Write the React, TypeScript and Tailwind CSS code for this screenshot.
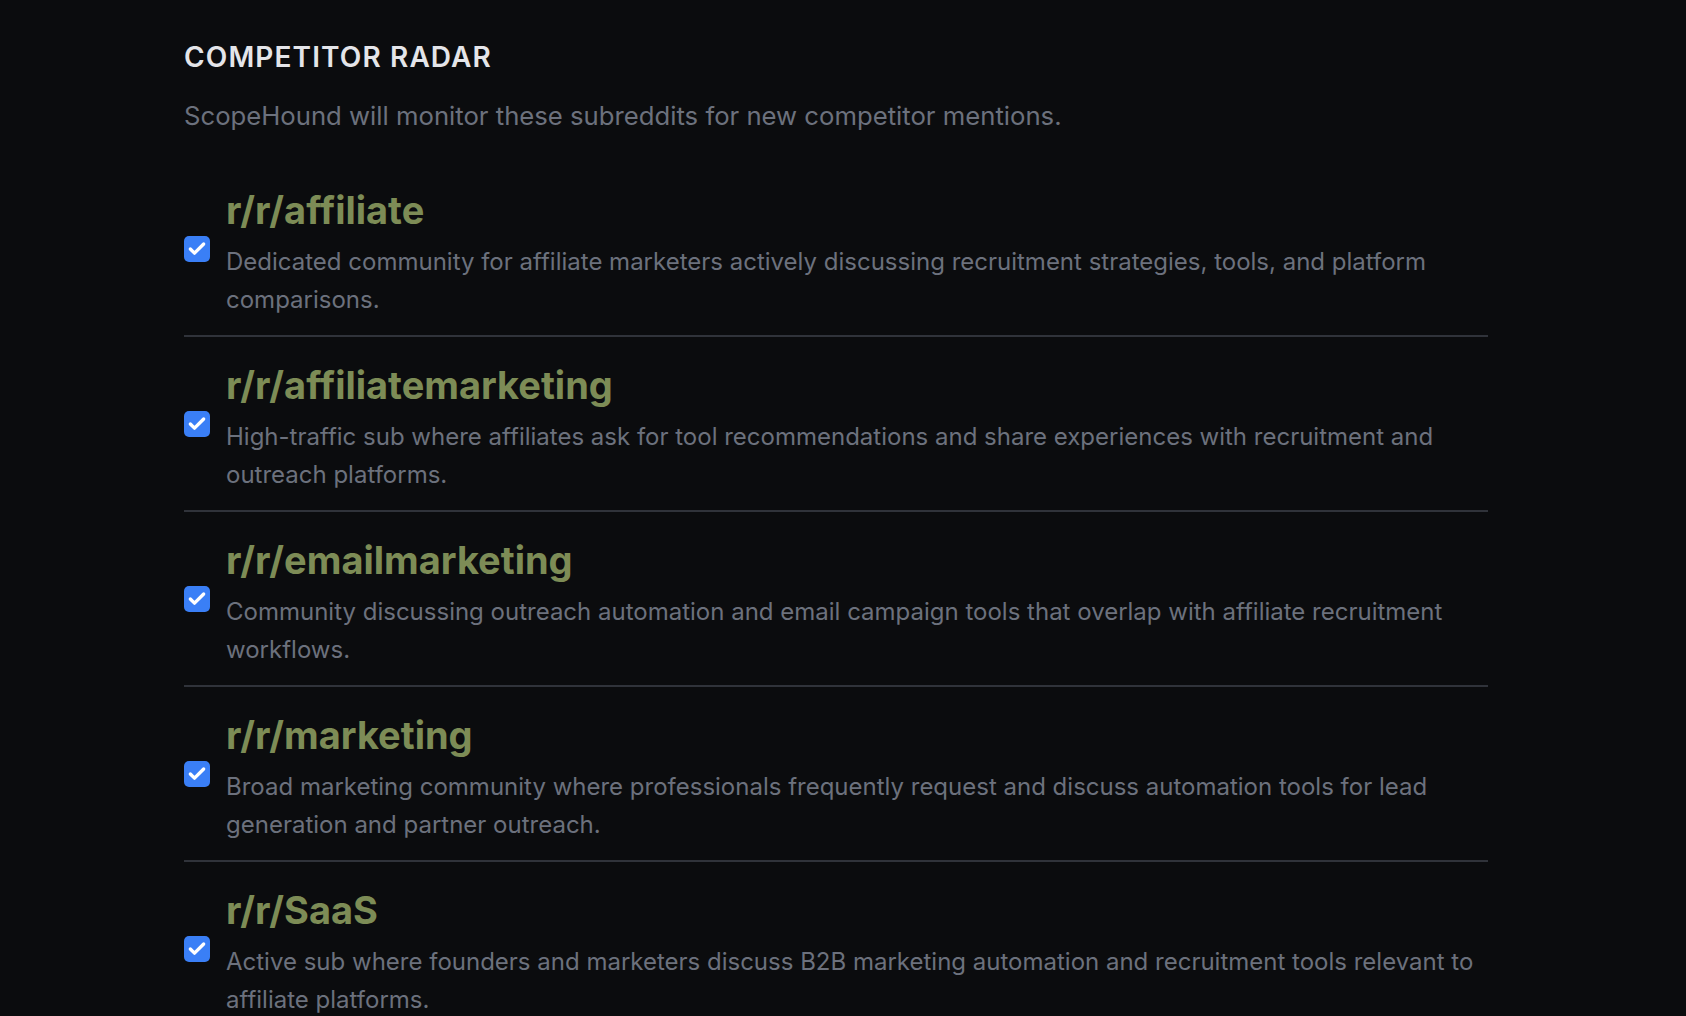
import { Check } from "lucide-react";

type Sub = { name: string; description: string };

const subs: Sub[] = [
  {
    name: "r/r/affiliate",
    description:
      "Dedicated community for affiliate marketers actively discussing recruitment strategies, tools, and platform comparisons.",
  },
  {
    name: "r/r/affiliatemarketing",
    description:
      "High-traffic sub where affiliates ask for tool recommendations and share experiences with recruitment and outreach platforms.",
  },
  {
    name: "r/r/emailmarketing",
    description:
      "Community discussing outreach automation and email campaign tools that overlap with affiliate recruitment workflows.",
  },
  {
    name: "r/r/marketing",
    description:
      "Broad marketing community where professionals frequently request and discuss automation tools for lead generation and partner outreach.",
  },
  {
    name: "r/r/SaaS",
    description:
      "Active sub where founders and marketers discuss B2B marketing automation and recruitment tools relevant to affiliate platforms.",
  },
];

const SubRow = ({ sub }: { sub: Sub }) => (
  <li className="flex items-center gap-4 border-b-2 border-[#30333a] pb-[16px] pt-[26px] last:border-b-0">
    <span className="mb-[10px] flex h-[26px] w-[26px] shrink-0 items-center justify-center rounded-[5px] bg-[#3a7ff6]">
      <Check className="h-[20px] w-[20px] text-white" strokeWidth={4} />
    </span>
    <div className="min-w-0 flex-1">
      <h3 className="text-[38px] font-bold leading-[45px] text-[#7d8c56]">{sub.name}</h3>
      <p className="mt-[10px] text-[24px] leading-[38px] text-[#6c717d]">{sub.description}</p>
    </div>
  </li>
);

export default function App() {
  return (
    <div className="min-h-screen overflow-hidden bg-[#0b0c0e] font-['Inter',sans-serif]">
      <div className="ml-[184px] w-[1304px] pt-[40px]">
        <h2 className="text-[28px] font-semibold leading-[34px] tracking-[0.04em] text-[#e4e5e9]">COMPETITOR RADAR</h2>
        <p className="mt-[25px] text-[25.7px] leading-[33px] text-[#6c717d]">
          ScopeHound will monitor these subreddits for new competitor mentions.
        </p>
        <ul className="mt-[30px]">
          {subs.map((s) => (
            <SubRow key={s.name} sub={s} />
          ))}
        </ul>
      </div>
    </div>
  );
}
